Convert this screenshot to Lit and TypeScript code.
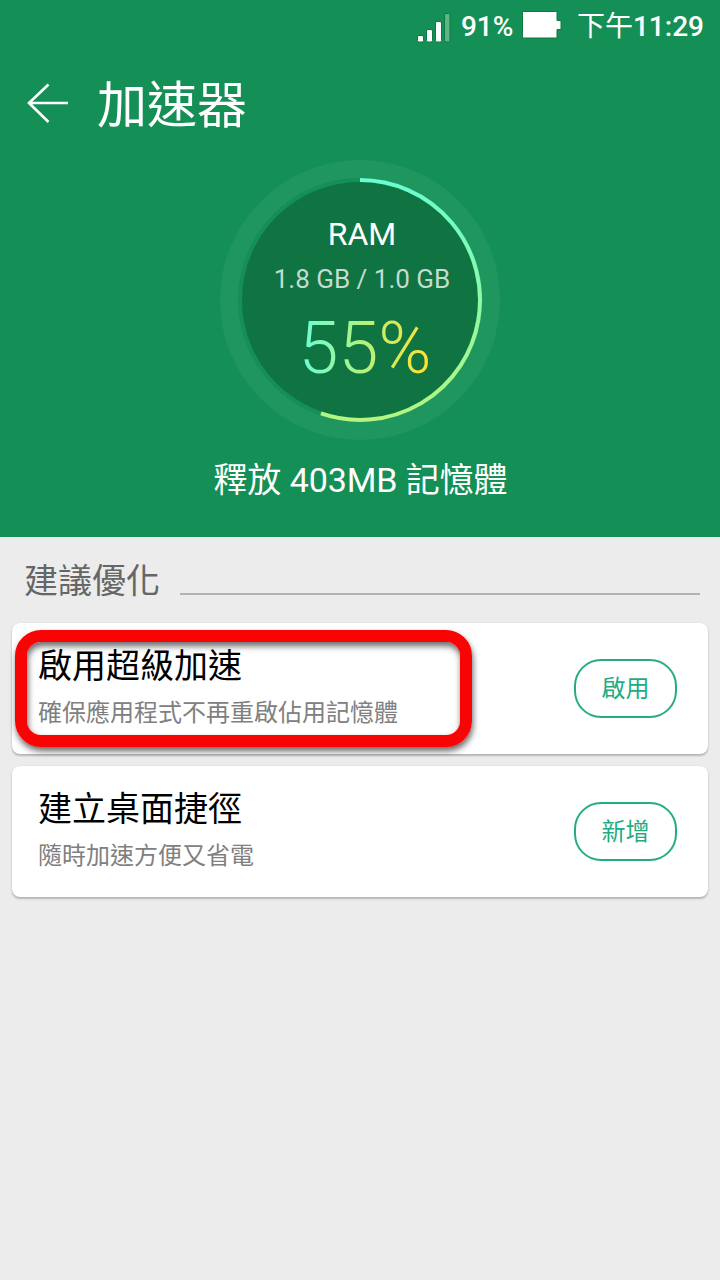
import { LitElement, html, css } from "lit";
import { customElement, property } from "lit/decorators.js";

@customElement("status-bar")
class StatusBar extends LitElement {
  static styles = css`
    :host { display: flex; align-items: center; justify-content: flex-end; height: 52px; padding-right: 16px; color: #fff; font-weight: 500; font-size: 28px; line-height: 54px; }
    .signal { width: 36px; height: 30px; margin-right: 9px; margin-top: 4px; }
    .pct { width: 52px; padding-top: 1px; white-space: nowrap; }
    .battery { width: 40px; height: 28px; margin: 0 15px 2px 9px; }
    .time { display: flex; padding-top: 1px; white-space: nowrap; }
    .cjk { font-weight: 400; }
  `;
  render() {
    return html`
      <svg class="signal" viewBox="0 0 36 30">
        <g fill="#fff" stroke="#0d7a42" stroke-width="1">
          <rect x="1.5" y="22.5" width="6" height="6.5" rx="1.5" />
          <rect x="10.5" y="16.5" width="6" height="12.5" rx="1.5" />
          <rect x="19.5" y="8.5" width="6" height="20.5" rx="1.5" />
          <rect x="28.5" y="0.5" width="5.5" height="28.5" rx="1.5" fill="#5fb487" />
        </g>
      </svg>
      <span class="pct">91%</span>
      <svg class="battery" viewBox="0 0 40 28">
        <path d="M.5.5H35V9.500H39V18.500H35V27H.5Z" fill="#fff" stroke="#0d7a42" stroke-width="1" />
      </svg>
      <span class="time"><span class="cjk">下午</span><span>11:29</span></span>
    `;
  }
}

@customElement("ram-gauge")
class RamGauge extends LitElement {
  @property({ type: Number }) degrees = 199;
  static styles = css`
    :host { display: grid; width: 280px; height: 280px; }
    .dial, .info { grid-area: 1 / 1; }
    .info { display: flex; flex-direction: column; align-items: center; padding-top: 54px; color: #fff; }
    .name { font-size: 32px; line-height: 40px; padding-left: 4px; }
    .usage { font-size: 26px; line-height: 32px; margin-top: 9px; padding-left: 4px; color: #c3dccf; white-space: nowrap; }
    .value { font-size: 72px; line-height: 84px; margin-top: 12px; padding-left: 10px; font-weight: 300; }
    .value span { background: linear-gradient(90deg, #64ffda, #b4f27c 50%, #ffe033 95%); -webkit-background-clip: text; background-clip: text; color: transparent; }
  `;
  render() {
    const a = (this.degrees * Math.PI) / 180;
    const x = 140 + 120 * Math.sin(a);
    const y = 140 - 120 * Math.cos(a);
    return html`
      <svg class="dial" viewBox="0 0 280 280" width="280" height="280">
        <defs>
          <linearGradient id="sweep" gradientUnits="userSpaceOnUse" x1="140" y1="20" x2="140" y2="260">
            <stop offset="0" stop-color="#69fdd0" />
            <stop offset="1" stop-color="#b4f57f" />
          </linearGradient>
        </defs>
        <circle cx="140" cy="140" r="140" fill="#1f965d" />
        <circle cx="140" cy="140" r="122" fill="#148f56" />
        <circle cx="140" cy="140" r="118" fill="#0f7342" />
        <path d="M140 20A120 120 0 1 1 ${x} ${y}" fill="none" stroke="url(#sweep)" stroke-width="4" />
      </svg>
      <div class="info">
        <div class="name">RAM</div>
        <div class="usage">1.8 GB / 1.0 GB</div>
        <div class="value"><span>55%</span></div>
      </div>
    `;
  }
}

@customElement("tip-card")
class TipCard extends LitElement {
  @property() heading = "";
  @property() detail = "";
  @property() action = "";
  static styles = css`
    :host { display: flex; align-items: center; justify-content: space-between; box-sizing: border-box; height: 131px; padding: 0 31px 0 26px; background: #fff; border-radius: 8px; box-shadow: 0 2px 2px rgba(0, 0, 0, 0.22), 0 0 2px rgba(0, 0, 0, 0.1); }
    .heading { font-size: 34px; line-height: 44px; color: #000; }
    .detail { font-size: 24px; line-height: 32px; margin-top: 9px; color: #808080; }
    .text { padding-bottom: 5px; }
    button { box-sizing: border-box; width: 103px; height: 59px; padding: 2px 0 0; border: 2px solid #25ac85; border-radius: 27px; background: none; color: #1fac85; font: inherit; font-size: 24px; line-height: 53px; }
  `;
  render() {
    return html`
      <div class="text">
        <div class="heading">${this.heading}</div>
        <div class="detail">${this.detail}</div>
      </div>
      <button>${this.action}</button>
    `;
  }
}

@customElement("app-root")
class AppRoot extends LitElement {
  static styles = css`
    :host { display: block; height: 1280px; overflow: hidden; background: #ececec; font-family: Roboto, "Noto Sans CJK TC", sans-serif; }
    .hero { display: flex; flex-direction: column; height: 537px; background: #148f55; color: #fff; }
    .bar { display: flex; align-items: center; height: 108px; padding-left: 26px; }
    .back { width: 44px; height: 42px; margin: 0 27px 6px 0; }
    .title { font-size: 50px; line-height: 60px; }
    .gauge { align-self: center; }
    .freed { align-self: center; margin-top: 18px; padding-left: 1px; font-size: 34px; line-height: 44px; letter-spacing: -0.08px; }
    .section { display: flex; height: 86px; padding: 0 20px 0 24px; }
    .label { margin-top: 22px; font-size: 34px; line-height: 44px; color: #666; }
    .rule { flex: 1; height: 2px; margin: 56px 0 0 20px; background: #b2b2b2; }
    .cards { display: flex; flex-direction: column; gap: 12px; padding: 0 12px; }
    .slot { position: relative; }
    .mark { position: absolute; left: 3px; top: 7px; box-sizing: border-box; width: 457px; height: 117px; border: 12px solid #f90404; border-radius: 26px; box-shadow: 1px 4px 6px rgba(0, 0, 0, 0.6), inset 1px 4px 6px rgba(0, 0, 0, 0.6); pointer-events: none; }
  `;
  render() {
    return html`
      <div class="hero">
        <status-bar></status-bar>
        <div class="bar">
          <svg class="back" viewBox="0 0 44 42" fill="none" stroke="#fff" stroke-width="2.6">
            <path d="M22.500 2.500 3 21 22.500 40M3 21H42" />
          </svg>
          <div class="title">加速器</div>
        </div>
        <ram-gauge class="gauge"></ram-gauge>
        <div class="freed">釋放 403MB 記憶體</div>
      </div>
      <div class="section">
        <div class="label">建議優化</div>
        <div class="rule"></div>
      </div>
      <div class="cards">
        <div class="slot">
          <tip-card heading="啟用超級加速" detail="確保應用程式不再重啟佔用記憶體" action="啟用"></tip-card>
          <div class="mark"></div>
        </div>
        <tip-card heading="建立桌面捷徑" detail="隨時加速方便又省電" action="新增"></tip-card>
      </div>
    `;
  }
}
